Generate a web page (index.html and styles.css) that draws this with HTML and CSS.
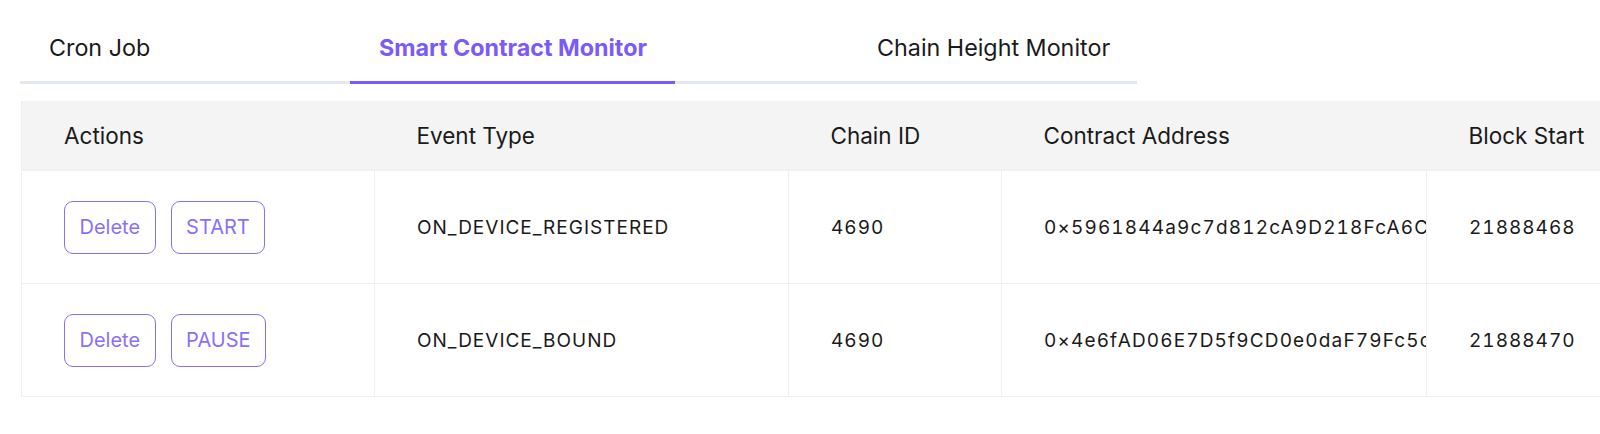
FILE: index.html
```html
<!DOCTYPE html>
<html lang="en">
<head>
  <meta charset="UTF-8" />
  <meta name="viewport" content="width=device-width, initial-scale=1.0"/>
  <title>Monitors</title>
  <link rel="stylesheet" href="styles.css">
</head>
<body>
  <div class="page">
    <div class="tabs">
      <div class="tab tab-cron">Cron Job</div>
      <div class="tab tab-contract active">Smart Contract Monitor</div>
      <div class="tab tab-height">Chain Height Monitor</div>
    </div>

    <div class="table-wrap">
      <table class="monitors">
        <colgroup>
          <col class="c-actions">
          <col class="c-event">
          <col class="c-chain">
          <col class="c-address">
          <col class="c-block">
        </colgroup>
        <thead>
          <tr>
            <th>Actions</th>
            <th>Event Type</th>
            <th>Chain ID</th>
            <th>Contract Address</th>
            <th>Block Start</th>
          </tr>
        </thead>
        <tbody>
          <tr>
            <td>
              <div class="actions">
                <button class="btn">Delete</button>
                <button class="btn">START</button>
              </div>
            </td>
            <td>ON_DEVICE_REGISTERED</td>
            <td>4690</td>
            <td><div class="addr">0×5961844a9c7d812cA9D218FcA6C</div></td>
            <td>21888468</td>
          </tr>
          <tr>
            <td>
              <div class="actions">
                <button class="btn">Delete</button>
                <button class="btn">PAUSE</button>
              </div>
            </td>
            <td>ON_DEVICE_BOUND</td>
            <td>4690</td>
            <td><div class="addr">0×4e6fAD06E7D5f9CD0e0daF79Fc5c</div></td>
            <td>21888470</td>
          </tr>
        </tbody>
      </table>
    </div>
  </div>
</body>
</html>
```

FILE: styles.css
```css
:root {
  --purple: #7a5af8;
  --purple-soft: #8b6ffb;
  --text: #1a1a1a;
  --line: #efeff2;
}

body {
  margin: 0;
  font-family: Inter, 'Noto Sans', sans-serif;
  color: var(--text);
  background: #fff;
  overflow: hidden;
}

.page {
  padding-left: 20px;
}

/* tabs */
.tabs {
  display: flex;
  width: 1117px;
  border-bottom: 3px solid #e3e8f0;
}

.tab {
  font-size: 23.3px;
  line-height: 30px;
  padding: 33px 0 18px 29px;
  margin-bottom: -3px;
  border-bottom: 3px solid transparent;
  box-sizing: border-box;
  white-space: nowrap;
  cursor: pointer;
}

.tab-cron { width: 330px; }
.tab-contract { width: 325px; }
.tab-height { width: 462px; padding-left: 202px; }

.tab.active {
  color: var(--purple);
  font-weight: 700;
  border-bottom-color: var(--purple);
}

/* table */
.table-wrap {
  margin-top: 17px;
  margin-left: 1px;
  overflow: hidden;
}

.monitors {
  border-collapse: collapse;
  table-layout: fixed;
  width: 1655px;
  border-left: 1px solid var(--line);
}

.c-actions { width: 353px; }
.c-event { width: 414px; }
.c-chain { width: 213px; }
.c-address { width: 425px; }
.c-block { width: 250px; }

.monitors th {
  background: #f4f4f4;
  font-weight: 400;
  font-size: 22.5px;
  text-align: left;
  height: 68px;
  padding: 0 0 0 42px;
  border-bottom: 2px solid #eef0f4;
}

.monitors td {
  height: 112px;
  padding: 0 0 0 42px;
  font-size: 19px;
  letter-spacing: 1px;
  font-variant-numeric: tabular-nums;
  white-space: nowrap;
  overflow: hidden;
  border-right: 1px solid var(--line);
  border-bottom: 1px solid var(--line);
}

.addr {
  overflow: hidden;
  letter-spacing: 1.15px;
}

.actions {
  display: flex;
  gap: 15px;
}

.btn {
  font-family: inherit;
  font-size: 20px;
  color: var(--purple-soft);
  background: #fff;
  border: 1.5px solid var(--purple-soft);
  border-radius: 9px;
  padding: 0 14.5px;
  height: 53px;
  cursor: pointer;
}
```
